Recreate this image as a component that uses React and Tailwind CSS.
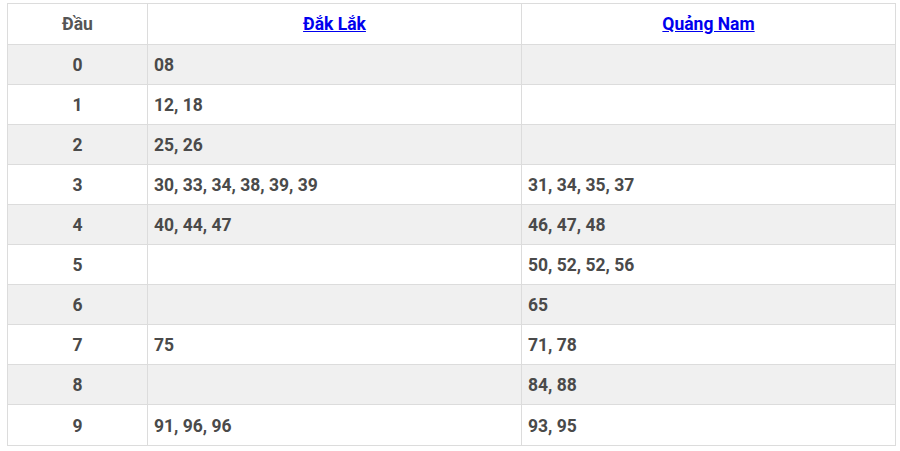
export default function App() {
  const rows = [
    ["0", "08", ""],
    ["1", "12, 18", ""],
    ["2", "25, 26", ""],
    ["3", "30, 33, 34, 38, 39, 39", "31, 34, 35, 37"],
    ["4", "40, 44, 47", "46, 47, 48"],
    ["5", "", "50, 52, 52, 56"],
    ["6", "", "65"],
    ["7", "75", "71, 78"],
    ["8", "", "84, 88"],
    ["9", "91, 96, 96", "93, 95"],
  ];
  return (
    <div className="w-[900px] h-[451px] bg-white pt-[3px] pl-[7px]" style={{ fontFamily: "Roboto, 'Noto Sans', sans-serif" }}>
      <table className="w-[889px] border-collapse text-[17.5px] font-bold text-[#4a4a4a]">
        <thead>
          <tr className="h-[41px] bg-white">
            <th className="w-[140px] border border-[#dcdcdc] text-center font-bold text-[#555]">Đầu</th>
            <th className="w-[374px] border border-[#dcdcdc] text-center">
              <a href="#" className="text-[#0000ee] underline">Đắk Lắk</a>
            </th>
            <th className="border border-[#dcdcdc] text-center">
              <a href="#" className="text-[#0000ee] underline">Quảng Nam</a>
            </th>
          </tr>
        </thead>
        <tbody>
          {rows.map((r, i) => (
            <tr key={i} className={i % 2 === 0 ? "h-[40px] bg-[#f0f0f0]" : i === 9 ? "h-[41px] bg-white" : "h-[40px] bg-white"}>
              <td className="border border-[#dcdcdc] pt-[2px] text-center">{r[0]}</td>
              <td className="border border-[#dcdcdc] px-[6px] pt-[2px]">{r[1]}</td>
              <td className="border border-[#dcdcdc] px-[6px] pt-[2px]">{r[2]}</td>
            </tr>
          ))}
        </tbody>
      </table>
    </div>
  );
}
